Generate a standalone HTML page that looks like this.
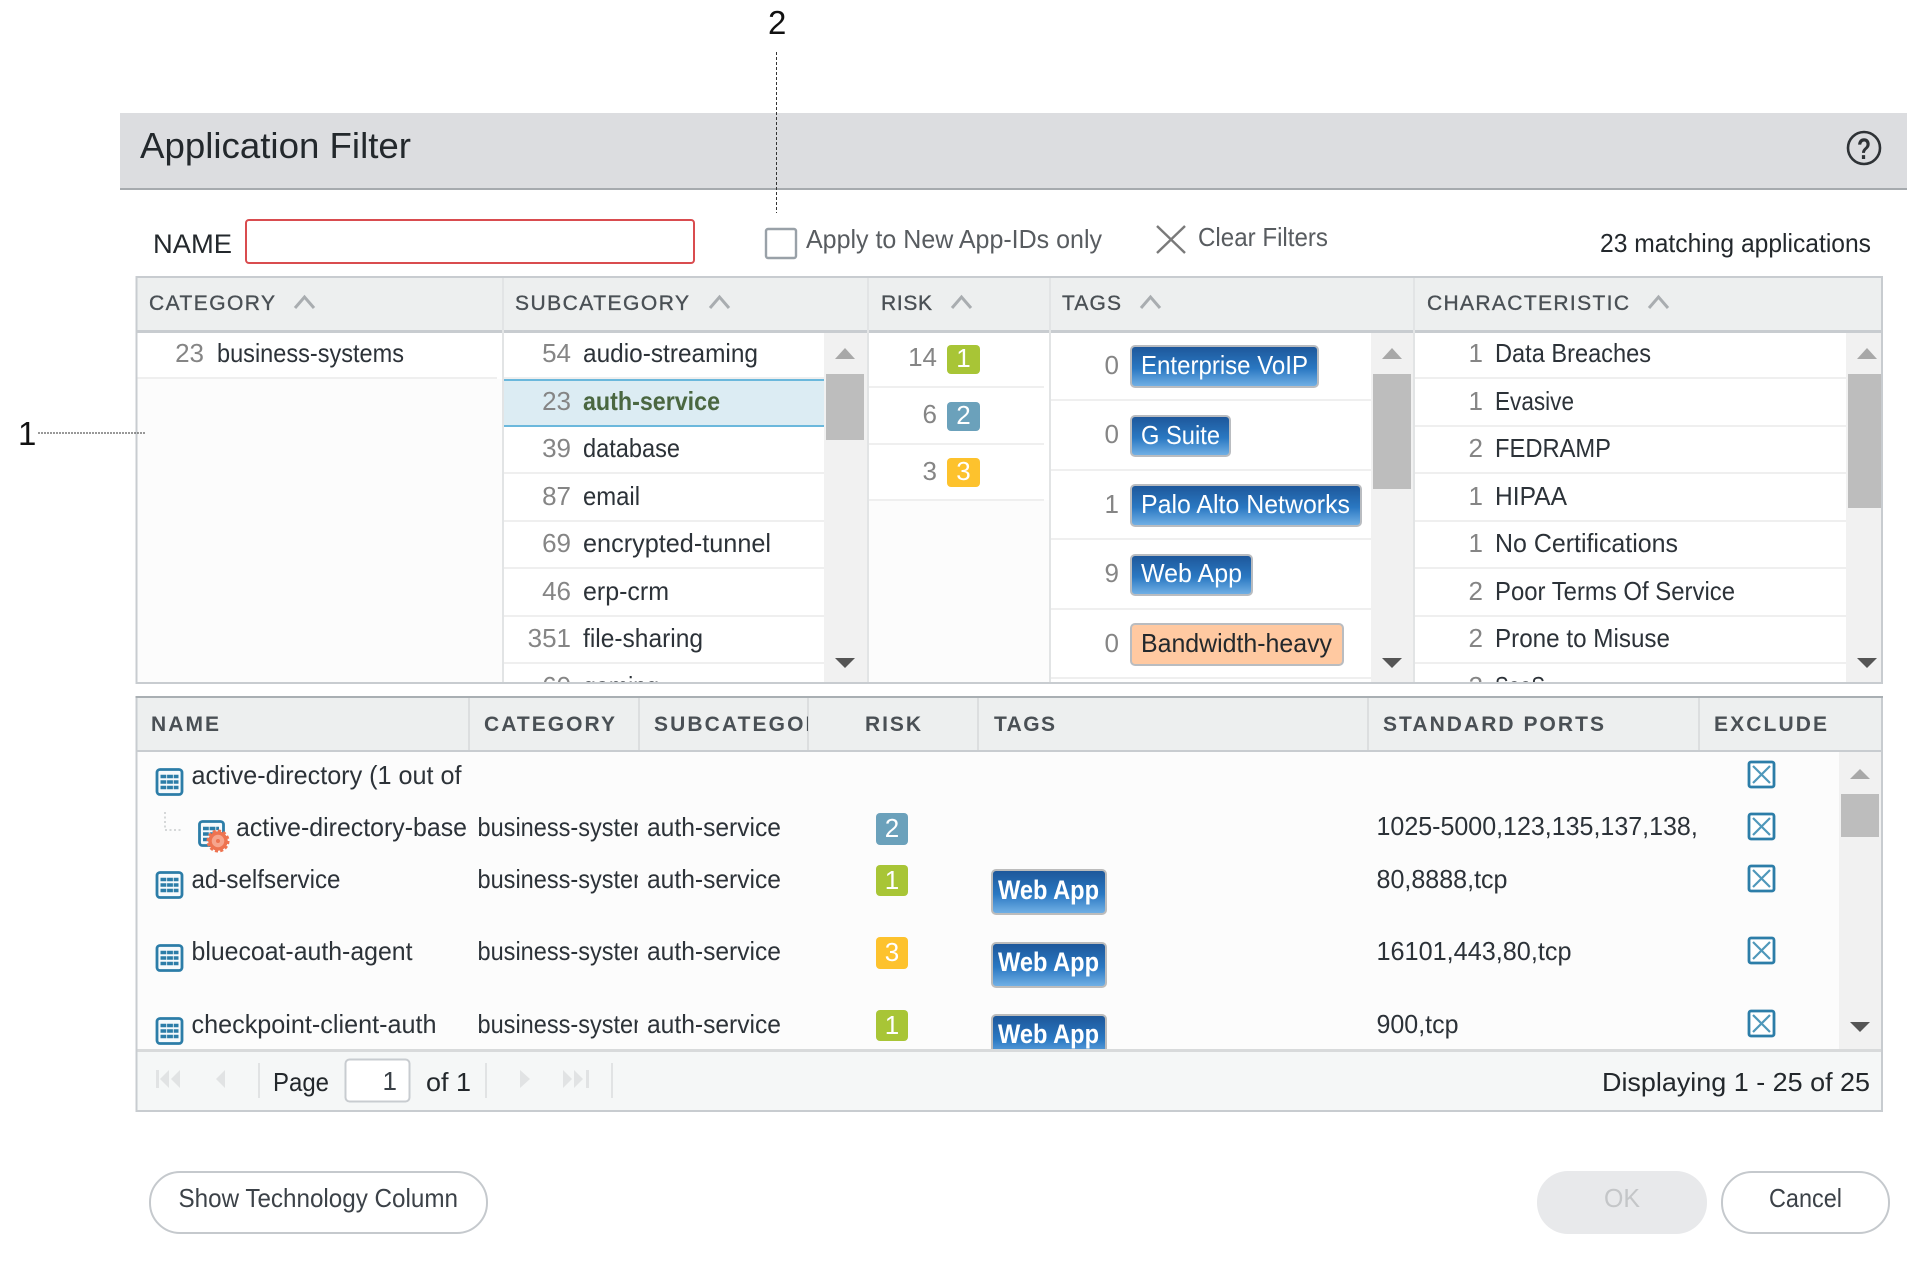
<!DOCTYPE html>
<html><head><meta charset="utf-8"><title>Application Filter</title>
<style>
html,body{margin:0;padding:0;background:#fff}
svg{display:block}
text{font-family:"Liberation Sans",sans-serif;font-size:26px;fill:#2c3238}
.n{fill:#858585;text-anchor:end}
.h{font-size:21px;fill:#4a5055;stroke:#4a5055;stroke-width:.35}
.hb{font-size:21px;fill:#4a5055;font-weight:700}
.w{fill:#fff;text-anchor:middle}
.t{fill:#fff}
.c{fill:none;stroke:#a9adb0;stroke-width:3}
</style></head><body>
<svg xmlns="http://www.w3.org/2000/svg" width="1907" height="1264" viewBox="0 0 1907 1264">
<defs>
<linearGradient id="g" x1="0" y1="0" x2="0" y2="1"><stop offset="0" stop-color="#1d5699"/><stop offset=".55" stop-color="#2a78c2"/><stop offset="1" stop-color="#74b2e6"/></linearGradient>
<clipPath id="c1"><rect x="137.500" y="332" width="1743.500" height="350"/></clipPath>
<clipPath id="c2"><rect x="137.500" y="752" width="1743.500" height="297"/></clipPath>
<clipPath id="c3"><rect x="470" y="752" width="168" height="297"/></clipPath>
<clipPath id="c4"><rect x="1369" y="752" width="329" height="297"/></clipPath>
<clipPath id="c5"><rect x="640" y="698" width="168" height="52"/></clipPath>
</defs>
<rect width="1907" height="1264" fill="#fff"/>

<!-- annotations -->
<text x="768" y="34" style="font-size:33px;fill:#111">2</text>
<text x="18" y="445" style="font-size:33px;fill:#111">1</text>

<!-- title bar -->
<rect x="120" y="113" width="1787" height="75" fill="#dcdde0"/>
<rect x="120" y="188" width="1787" height="2" fill="#a6aaae"/>
<text x="140" y="158" textLength="271" lengthAdjust="spacingAndGlyphs" style="font-size:36px;fill:#23282c">Application Filter</text>
<circle cx="1864" cy="148" r="16" fill="none" stroke="#2e3236" stroke-width="2.600"/>
<text x="1857" y="159" textLength="14" lengthAdjust="spacingAndGlyphs" style="font-size:30px;font-weight:700;fill:#2e3236">?</text>

<line x1="776.5" y1="52" x2="776.5" y2="213" stroke="#333" stroke-width="1" stroke-dasharray="3 2"/>

<!-- name row -->
<text x="153" y="253" textLength="79" lengthAdjust="spacingAndGlyphs" style="font-size:27px;fill:#23282c">NAME</text>
<rect x="246" y="220" width="448" height="43" rx="3" fill="#fff" stroke="#d94c4f" stroke-width="2"/>
<rect x="766" y="229" width="30" height="29" rx="2" fill="#fff" stroke="#99a1a8" stroke-width="2.400"/>
<text x="806" y="248" textLength="296" lengthAdjust="spacingAndGlyphs" style="fill:#585c60">Apply to New App-IDs only</text>
<path d="M1157 226L1185 253M1185 226L1157 253" stroke="#7a7a7a" stroke-width="2.400" fill="none"/>
<text x="1198" y="246" textLength="130" lengthAdjust="spacingAndGlyphs" style="fill:#585c60">Clear Filters</text>
<text x="1600" y="252" textLength="271" lengthAdjust="spacingAndGlyphs" style="fill:#23282c">23 matching applications</text>

<!-- filter table -->
<rect x="136.500" y="277" width="1745.500" height="406" fill="#fff" stroke="#c8ccd0" stroke-width="2"/>
<rect x="137.500" y="278" width="1743.500" height="52" fill="#edefef"/>
<rect x="137.500" y="330" width="1743.500" height="3" fill="#c8ccd0"/>
<rect x="137.500" y="379" width="365.500" height="303" fill="#fcfcfc"/>
<rect x="137.500" y="377" width="359.500" height="2" fill="#efefef"/>
<g fill="#e2e4e5"><rect x="502" y="278" width="2" height="404"/><rect x="867" y="278" width="2" height="404"/><rect x="1049" y="278" width="2" height="404"/><rect x="1413" y="278" width="2" height="404"/></g>
<rect x="869" y="500" width="180" height="182" fill="#fcfcfc"/>

<text class="h" x="149" y="310" textLength="126">CATEGORY</text>
<path class="c" d="M295 308L304.500 297L314 308"/>
<text class="h" x="515" y="310" textLength="174">SUBCATEGORY</text>
<path class="c" d="M710 308L719.500 297L729 308"/>
<text class="h" x="881" y="310" textLength="51">RISK</text>
<path class="c" d="M952 308L961.500 297L971 308"/>
<text class="h" x="1062" y="310" textLength="59">TAGS</text>
<path class="c" d="M1141 308L1150.500 297L1160 308"/>
<text class="h" x="1427" y="310" textLength="202">CHARACTERISTIC</text>
<path class="c" d="M1649 308L1658.500 297L1668 308"/>

<g clip-path="url(#c1)">
<!-- category -->
<text class="n" x="204" y="362">23</text>
<text x="217" y="362" textLength="187" lengthAdjust="spacingAndGlyphs">business-systems</text>

<!-- subcategory -->
<rect x="504" y="379" width="320" height="48" fill="#dcecf3"/>
<rect x="504" y="379" width="320" height="2" fill="#6bb8dc"/>
<rect x="504" y="425" width="320" height="2" fill="#6bb8dc"/>
<g fill="#efefef"><rect x="504" y="377" width="320" height="2"/><rect x="504" y="472" width="320" height="2"/><rect x="504" y="520" width="320" height="2"/><rect x="504" y="567" width="320" height="2"/><rect x="504" y="615" width="320" height="2"/><rect x="504" y="662" width="320" height="2"/></g>
<text class="n" x="571" y="362">54</text><text x="583" y="362" textLength="175" lengthAdjust="spacingAndGlyphs">audio-streaming</text>
<text class="n" x="571" y="410">23</text><text x="583" y="410" textLength="137" lengthAdjust="spacingAndGlyphs" style="fill:#4a6741;font-weight:700">auth-service</text>
<text class="n" x="571" y="457">39</text><text x="583" y="457" textLength="97" lengthAdjust="spacingAndGlyphs">database</text>
<text class="n" x="571" y="505">87</text><text x="583" y="505" textLength="57" lengthAdjust="spacingAndGlyphs">email</text>
<text class="n" x="571" y="552">69</text><text x="583" y="552" textLength="188" lengthAdjust="spacingAndGlyphs">encrypted-tunnel</text>
<text class="n" x="571" y="600">46</text><text x="583" y="600" textLength="86" lengthAdjust="spacingAndGlyphs">erp-crm</text>
<text class="n" x="571" y="647">351</text><text x="583" y="647" textLength="120" lengthAdjust="spacingAndGlyphs">file-sharing</text>
<text class="n" x="571" y="695">60</text><text x="583" y="695" textLength="76" lengthAdjust="spacingAndGlyphs">gaming</text>
<rect x="824" y="333" width="43" height="349" fill="#f1f1f1"/>
<rect x="826" y="374" width="38" height="66" fill="#bdbdbd"/>
<path d="M835 359H855L845 348Z" fill="#a8a8a8"/>
<path d="M835 658H855L845 668Z" fill="#555"/>

<!-- risk -->
<g fill="#efefef"><rect x="869" y="386" width="175" height="2"/><rect x="869" y="443" width="175" height="2"/><rect x="869" y="499" width="175" height="2"/></g>
<text class="n" x="937" y="366">14</text>
<rect x="947" y="345" width="33" height="29" rx="4" fill="#a8c536"/><text class="w" x="963.500" y="367">1</text>
<text class="n" x="937" y="423">6</text>
<rect x="947" y="402" width="33" height="29" rx="4" fill="#6ba1bb"/><text class="w" x="963.500" y="424">2</text>
<text class="n" x="937" y="480">3</text>
<rect x="947" y="458" width="33" height="29" rx="4" fill="#fdc22d"/><text class="w" x="963.500" y="480">3</text>

<!-- tags -->
<g fill="#efefef"><rect x="1051" y="399" width="320" height="2"/><rect x="1051" y="469" width="320" height="2"/><rect x="1051" y="538" width="320" height="2"/><rect x="1051" y="608" width="320" height="2"/><rect x="1051" y="677" width="320" height="2"/></g>
<text class="n" x="1119" y="374">0</text>
<rect x="1131" y="346" width="187" height="41" rx="4" fill="url(#g)" stroke="#b9bcc0" stroke-width="2"/>
<text class="t" x="1141" y="374" textLength="167" lengthAdjust="spacingAndGlyphs">Enterprise VoIP</text>
<text class="n" x="1119" y="443">0</text>
<rect x="1131" y="416" width="99" height="40" rx="4" fill="url(#g)" stroke="#b9bcc0" stroke-width="2"/>
<text class="t" x="1141" y="444" textLength="79" lengthAdjust="spacingAndGlyphs">G Suite</text>
<text class="n" x="1119" y="513">1</text>
<rect x="1131" y="485" width="230" height="41" rx="4" fill="url(#g)" stroke="#b9bcc0" stroke-width="2"/>
<text class="t" x="1141" y="513" textLength="209" lengthAdjust="spacingAndGlyphs">Palo Alto Networks</text>
<text class="n" x="1119" y="582">9</text>
<rect x="1131" y="555" width="121" height="40" rx="4" fill="url(#g)" stroke="#b9bcc0" stroke-width="2"/>
<text class="t" x="1141" y="582" textLength="101" lengthAdjust="spacingAndGlyphs">Web App</text>
<text class="n" x="1119" y="652">0</text>
<rect x="1131" y="624" width="212" height="41" rx="4" fill="#ffc9a1" stroke="#b9bcc0" stroke-width="2"/>
<text x="1141" y="652" textLength="191" lengthAdjust="spacingAndGlyphs" style="fill:#23282c">Bandwidth-heavy</text>
<rect x="1371" y="333" width="42" height="349" fill="#f1f1f1"/>
<rect x="1373" y="374" width="38" height="115" fill="#bdbdbd"/>
<path d="M1382 359H1402L1392 348Z" fill="#a8a8a8"/>
<path d="M1382 658H1402L1392 668Z" fill="#555"/>

<!-- characteristic -->
<g fill="#efefef"><rect x="1415" y="377" width="431" height="2"/><rect x="1415" y="425" width="431" height="2"/><rect x="1415" y="472" width="431" height="2"/><rect x="1415" y="520" width="431" height="2"/><rect x="1415" y="567" width="431" height="2"/><rect x="1415" y="615" width="431" height="2"/><rect x="1415" y="662" width="431" height="2"/></g>
<text class="n" x="1483" y="362">1</text><text x="1495" y="362" textLength="156" lengthAdjust="spacingAndGlyphs">Data Breaches</text>
<text class="n" x="1483" y="410">1</text><text x="1495" y="410" textLength="79" lengthAdjust="spacingAndGlyphs">Evasive</text>
<text class="n" x="1483" y="457">2</text><text x="1495" y="457" textLength="116" lengthAdjust="spacingAndGlyphs">FEDRAMP</text>
<text class="n" x="1483" y="505">1</text><text x="1495" y="505" textLength="72" lengthAdjust="spacingAndGlyphs">HIPAA</text>
<text class="n" x="1483" y="552">1</text><text x="1495" y="552" textLength="183" lengthAdjust="spacingAndGlyphs">No Certifications</text>
<text class="n" x="1483" y="600">2</text><text x="1495" y="600" textLength="240" lengthAdjust="spacingAndGlyphs">Poor Terms Of Service</text>
<text class="n" x="1483" y="647">2</text><text x="1495" y="647" textLength="175" lengthAdjust="spacingAndGlyphs">Prone to Misuse</text>
<text class="n" x="1483" y="695">2</text><text x="1495" y="695" textLength="50" lengthAdjust="spacingAndGlyphs">SaaS</text>
<rect x="1846" y="333" width="35" height="349" fill="#f1f1f1"/>
<rect x="1848" y="374" width="33" height="134" fill="#bdbdbd"/>
<path d="M1857 359H1877L1867 348Z" fill="#a8a8a8"/>
<path d="M1857 658H1877L1867 668Z" fill="#555"/>
</g>
<rect x="135.500" y="682" width="1747.500" height="2" fill="#c8ccd0"/>
<line x1="38" y1="433" x2="145" y2="433" stroke="#333" stroke-width="1" stroke-dasharray="2 1"/>

<!-- apps table -->
<rect x="136.500" y="697" width="1745.500" height="414" fill="#fcfcfc" stroke="#c8ccd0" stroke-width="2"/>
<rect x="135.500" y="696" width="1747.500" height="2" fill="#a9afb3"/>
<rect x="137.500" y="698" width="1743.500" height="52" fill="#edefef"/>
<rect x="137.500" y="750" width="1743.500" height="2" fill="#c8ccd0"/>
<g fill="#dcdedf"><rect x="468" y="698" width="2" height="52"/><rect x="638" y="698" width="2" height="52"/><rect x="807" y="698" width="2" height="52"/><rect x="977" y="698" width="2" height="52"/><rect x="1367" y="698" width="2" height="52"/><rect x="1698" y="698" width="2" height="52"/></g>
<text class="hb" x="151" y="731" textLength="68">NAME</text>
<text class="hb" x="484" y="731" textLength="131">CATEGORY</text>
<g clip-path="url(#c5)"><text class="hb" x="654" y="731" textLength="182">SUBCATEGORY</text></g>
<text class="hb" x="865" y="731" textLength="56">RISK</text>
<text class="hb" x="994" y="731" textLength="61">TAGS</text>
<text class="hb" x="1383" y="731" textLength="221">STANDARD PORTS</text>
<text class="hb" x="1714" y="731" textLength="113">EXCLUDE</text>

<g clip-path="url(#c2)">
<!-- app icons -->
<g fill="#f6fafc" stroke="#2c7da8" stroke-width="2.800">
<rect x="157" y="769.500" width="25" height="25" rx="3"/>
<rect x="199.500" y="821.500" width="24" height="24" rx="3"/>
<rect x="157" y="872.500" width="25" height="25" rx="3"/>
<rect x="157" y="945.500" width="25" height="25" rx="3"/>
<rect x="157" y="1018.500" width="25" height="25" rx="3"/>
</g>
<g fill="none" stroke="#2c7da8" stroke-width="3.400" stroke-dasharray="5.800 .8">
<path d="M160.500 776.500H178.500M160.500 782H178.500M160.500 787.500H178.500"/>
<path d="M203 828.500H219M203 834H219M203 839.500H219"/>
<path d="M160.500 879.500H178.500M160.500 885H178.500M160.500 890.500H178.500"/>
<path d="M160.500 952.500H178.500M160.500 958H178.500M160.500 963.500H178.500"/>
<path d="M160.500 1025.500H178.500M160.500 1031H178.500M160.500 1036.500H178.500"/>
</g>
<circle cx="218" cy="841" r="8" fill="#f6a58d" stroke="#ee7350" stroke-width="3.500"/>
<circle cx="218" cy="841" r="10" fill="none" stroke="#ee7350" stroke-width="3" stroke-dasharray="3 2.200"/>
<circle cx="218" cy="841" r="2" fill="#ee7350"/>
<path d="M165 812V830H181" fill="none" stroke="#d5d7d8" stroke-width="2" stroke-dasharray="2 2.500"/>

<!-- names -->
<text x="191.500" y="784" textLength="270" lengthAdjust="spacingAndGlyphs">active-directory (1 out of</text>
<text x="236" y="836" textLength="231" lengthAdjust="spacingAndGlyphs">active-directory-base</text>
<text x="191.500" y="888" textLength="149" lengthAdjust="spacingAndGlyphs">ad-selfservice</text>
<text x="191.500" y="960" textLength="221" lengthAdjust="spacingAndGlyphs">bluecoat-auth-agent</text>
<text x="191.500" y="1033" textLength="245" lengthAdjust="spacingAndGlyphs">checkpoint-client-auth</text>

<g clip-path="url(#c3)">
<text x="477.500" y="836" textLength="187" lengthAdjust="spacingAndGlyphs">business-systems</text>
<text x="477.500" y="888" textLength="187" lengthAdjust="spacingAndGlyphs">business-systems</text>
<text x="477.500" y="960" textLength="187" lengthAdjust="spacingAndGlyphs">business-systems</text>
<text x="477.500" y="1033" textLength="187" lengthAdjust="spacingAndGlyphs">business-systems</text>
</g>
<text x="647" y="836" textLength="134" lengthAdjust="spacingAndGlyphs">auth-service</text>
<text x="647" y="888" textLength="134" lengthAdjust="spacingAndGlyphs">auth-service</text>
<text x="647" y="960" textLength="134" lengthAdjust="spacingAndGlyphs">auth-service</text>
<text x="647" y="1033" textLength="134" lengthAdjust="spacingAndGlyphs">auth-service</text>

<!-- risk badges -->
<rect x="876" y="813" width="32" height="32" rx="4" fill="#6ba1bb"/><text class="w" x="892" y="837">2</text>
<rect x="876" y="865" width="32" height="31" rx="4" fill="#a8c536"/><text class="w" x="892" y="889">1</text>
<rect x="876" y="937" width="32" height="32" rx="4" fill="#fdc22d"/><text class="w" x="892" y="961">3</text>
<rect x="876" y="1010" width="32" height="31" rx="4" fill="#a8c536"/><text class="w" x="892" y="1034">1</text>

<!-- web app tags -->
<rect x="992" y="870" width="114" height="44" rx="4" fill="url(#g)" stroke="#bcbcbc" stroke-width="2"/>
<text class="t" x="998" y="899" textLength="101" lengthAdjust="spacingAndGlyphs" style="font-size:27px;font-weight:700">Web App</text>
<rect x="992" y="943" width="114" height="44" rx="4" fill="url(#g)" stroke="#bcbcbc" stroke-width="2"/>
<text class="t" x="998" y="971" textLength="101" lengthAdjust="spacingAndGlyphs" style="font-size:27px;font-weight:700">Web App</text>
<rect x="992" y="1015" width="114" height="44" rx="4" fill="url(#g)" stroke="#bcbcbc" stroke-width="2"/>
<text class="t" x="998" y="1043" textLength="101" lengthAdjust="spacingAndGlyphs" style="font-size:27px;font-weight:700">Web App</text>

<!-- ports -->
<g clip-path="url(#c4)"><text x="1376.500" y="835" textLength="363" lengthAdjust="spacingAndGlyphs">1025-5000,123,135,137,138,139</text></g>
<text x="1376.500" y="888" textLength="131" lengthAdjust="spacingAndGlyphs">80,8888,tcp</text>
<text x="1376.500" y="960" textLength="195" lengthAdjust="spacingAndGlyphs">16101,443,80,tcp</text>
<text x="1376.500" y="1033" textLength="82" lengthAdjust="spacingAndGlyphs">900,tcp</text>

<!-- exclude -->
<g fill="#fff" stroke="#2c7da8" stroke-width="2.800">
<rect x="1749" y="762" width="25" height="25" rx="2"/>
<rect x="1749" y="814" width="25" height="25" rx="2"/>
<rect x="1749" y="866" width="25" height="25" rx="2"/>
<rect x="1749" y="938" width="25" height="25" rx="2"/>
<rect x="1749" y="1011" width="25" height="25" rx="2"/>
</g>
<g fill="none" stroke="#4f98ba" stroke-width="2.200">
<path d="M1753 766L1770 783M1770 766L1753 783"/>
<path d="M1753 818L1770 835M1770 818L1753 835"/>
<path d="M1753 870L1770 887M1770 870L1753 887"/>
<path d="M1753 942L1770 959M1770 942L1753 959"/>
<path d="M1753 1015L1770 1032M1770 1015L1753 1032"/>
</g>

<!-- scrollbar -->
<rect x="1839" y="752" width="42" height="297" fill="#f1f1f1"/>
<rect x="1841" y="794" width="38" height="43" fill="#bdbdbd"/>
<path d="M1850 779H1870L1860 769Z" fill="#a8a8a8"/>
<path d="M1850 1022H1870L1860 1032Z" fill="#555"/>
</g>

<!-- toolbar -->
<rect x="137.500" y="1049" width="1743.500" height="3" fill="#d8dadb"/>
<rect x="137.500" y="1052" width="1743.500" height="58" fill="#f5f7f7"/>
<g fill="#e1e3e4">
<rect x="156" y="1070" width="3" height="18"/><path d="M169 1070V1088L160 1079ZM180 1070V1088L171 1079Z"/>
<path d="M225 1070V1088L216 1079Z"/>
<rect x="258" y="1063" width="2" height="35"/>
<rect x="485" y="1063" width="2" height="35"/>
<path d="M520 1070V1088L530 1079Z"/>
<path d="M563 1070V1088L572 1079ZM574 1070V1088L583 1079Z"/><rect x="586" y="1070" width="3" height="18"/>
<rect x="611" y="1063" width="2" height="35"/>
</g>
<text x="273" y="1091" textLength="56" lengthAdjust="spacingAndGlyphs" style="fill:#23282c">Page</text>
<rect x="345.500" y="1059.500" width="64" height="42" rx="4" fill="#fff" stroke="#c8ccd0" stroke-width="2"/>
<text x="397" y="1090" text-anchor="end" style="fill:#3a4046">1</text>
<text x="426" y="1091" textLength="45" lengthAdjust="spacingAndGlyphs" style="fill:#23282c">of 1</text>
<text x="1602" y="1091" textLength="268" lengthAdjust="spacingAndGlyphs" style="fill:#23282c">Displaying 1 - 25 of 25</text>

<!-- buttons -->
<rect x="150" y="1172" width="337" height="61" rx="30" fill="#fff" stroke="#c5c9cd" stroke-width="2"/>
<text x="178.500" y="1207" textLength="279.500" lengthAdjust="spacingAndGlyphs" style="fill:#3c4248">Show Technology Column</text>
<rect x="1537" y="1171" width="170" height="63" rx="31" fill="#e8e9eb"/>
<text x="1604" y="1207" textLength="36" lengthAdjust="spacingAndGlyphs" style="fill:#c4c6c8">OK</text>
<rect x="1722" y="1172" width="167" height="61" rx="30" fill="#fff" stroke="#c5c9cd" stroke-width="2"/>
<text x="1769" y="1207" textLength="73" lengthAdjust="spacingAndGlyphs" style="fill:#3c4248">Cancel</text>
</svg>
</body></html>
